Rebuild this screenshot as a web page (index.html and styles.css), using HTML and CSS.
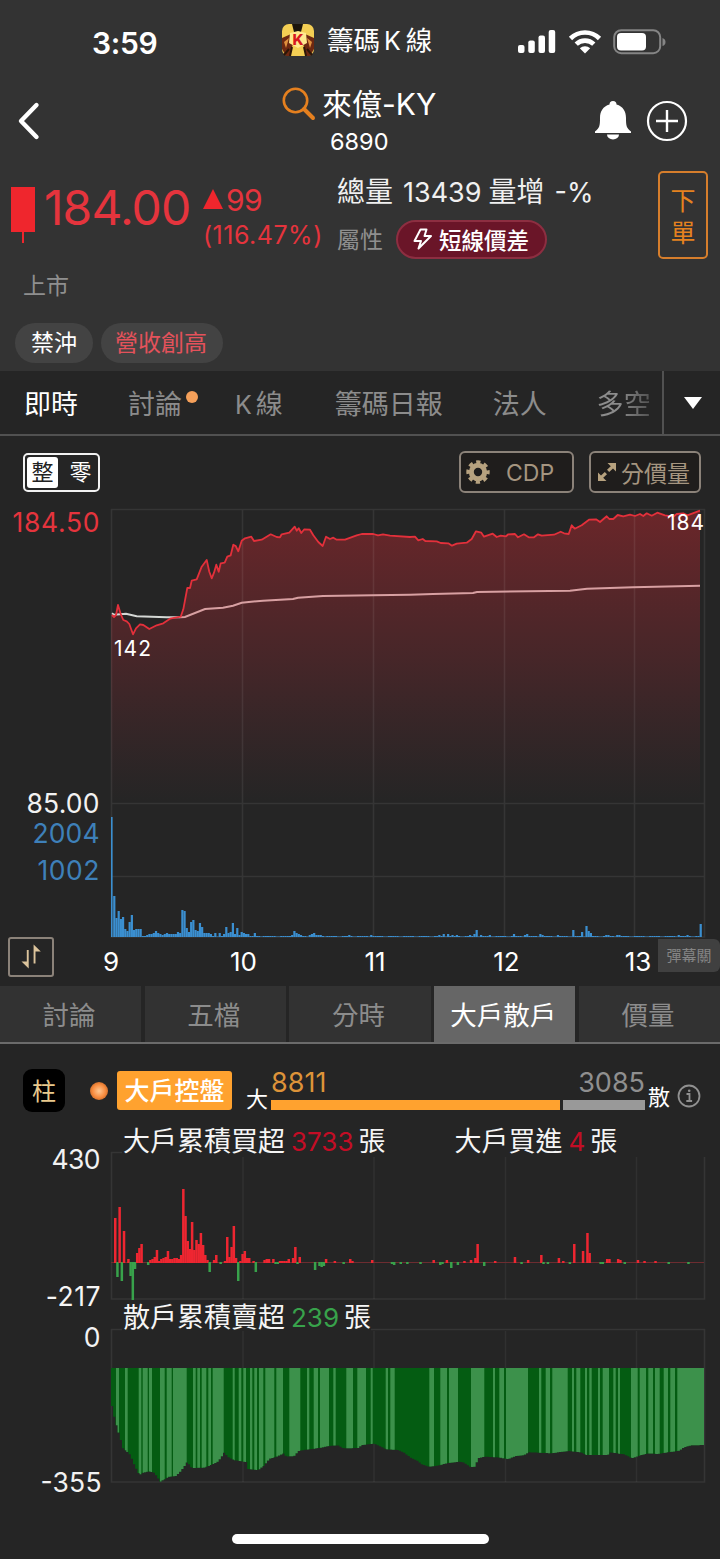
FILE: index.html
```html
<!DOCTYPE html>
<html lang="zh-Hant">
  <head>
    <meta charset="UTF-8">
    <title>籌碼K線</title>
    <link rel="stylesheet" href="styles.css">
  </head>
  <body>
    <div id="app">
      <!-- Header -->
      <header>
        <div class="status-bar">
          <div class="time">3:59</div>
          <div class="app-name">
            <svg width="34" height="32" viewBox="0 0 34 32">
              <rect x="1" y="0" width="32" height="32" rx="7" fill="#f4cf54"/>
              <path d="M11 0h11l-2 8h-7z" fill="#1c150c"/>
              <path d="M1 14l9-4 3 5-4 17H5L1 25zM33 14l-9-4-3 5 4 17h4l4-7z" fill="#6d2811"/>
              <path d="M3 18l5-4-3 10zM31 18l-5-4 3 10z" fill="#e0903d"/>
              <path d="M9 32l2-9M25 32l-2-9M3 31l5-6M31 31l-5-6" stroke="#2b1608" stroke-width="2"/>
              <path d="M9 9l8-2 8 2 1 10-9 5-9-5z" fill="#ffe98e"/>
              <text x="17" y="21" text-anchor="middle" font-size="15" font-weight="800" fill="#d7191f">K</text>
            </svg>
            <span>籌碼<i>K</i>線</span>
          </div>
          <div class="status-icons">
            <svg width="38" height="26" viewBox="0 0 38 26" fill="#fff">
              <rect x="0" y="16" width="6.500" height="8" rx="2"/>
              <rect x="10.300" y="11.500" width="6.500" height="12.500" rx="2"/>
              <rect x="20.500" y="6.500" width="6.500" height="17.500" rx="2"/>
              <rect x="30.700" y="1" width="6.500" height="23" rx="2"/>
            </svg>
            <svg width="34" height="26" viewBox="0 0 34 26" fill="none" stroke="#fff" stroke-width="4.600">
              <path d="M2.500 9.500a20.500 20.500 0 0 1 29 0"/>
              <path d="M8.200 15.200a12.500 12.500 0 0 1 17.600 0"/>
              <path d="M17 24.500l-5.200-5.200a7.500 7.500 0 0 1 10.400 0z" fill="#fff" stroke="none"/>
            </svg>
            <svg width="54" height="26" viewBox="0 0 54 26">
              <rect x="1.200" y="1.200" width="46" height="23" rx="7" fill="none" stroke="#858585" stroke-width="2"/>
              <rect x="4" y="4" width="29" height="17.400" rx="4" fill="#fff"/>
              <path d="M49.500 9q3 1 3 4t-3 4z" fill="#858585"/>
            </svg>
          </div>
        </div>

        <div class="nav">
          <svg class="back" width="24" height="38" viewBox="0 0 24 38">
            <path d="M19.500 3L4 19l15.500 16" fill="none" stroke="#fff" stroke-width="4.400" stroke-linecap="round" stroke-linejoin="round"/>
          </svg>
          <div class="stock">
            <div class="stock-name">
              <svg width="34" height="34" viewBox="0 0 34 34" fill="none" stroke="#e5801f">
                <circle cx="13.500" cy="13.500" r="11.700" stroke-width="2.600"/>
                <path d="M22 22l9 9" stroke-width="4" stroke-linecap="round"/>
              </svg>
              <span>來億-KY</span>
            </div>
            <div class="stock-id">6890</div>
          </div>
          <div class="nav-icons">
            <svg width="38" height="40" viewBox="0 0 38 40" fill="#fff">
              <path d="M19 1a3.500 3.500 0 0 1 3.500 3.500C29 6.500 32 11 32 18c0 8 .5 10 5 13.500V33H1v-1.500C5.500 28 6 26 6 18c0-7 3-11.500 9.500-13.500A3.500 3.500 0 0 1 19 1z"/>
              <path d="M13 34.500h12a6 5 0 0 1-12 0z"/>
            </svg>
            <svg width="42" height="42" viewBox="0 0 42 42" fill="none" stroke="#fff">
              <circle cx="21" cy="21" r="19" stroke-width="2.200"/>
              <path d="M21 10v22M10 21h22" stroke-width="2.400"/>
            </svg>
          </div>
        </div>

        <div class="quote">
          <svg class="candle" width="24" height="58" viewBox="0 0 24 58" fill="#ef262d">
            <rect width="24" height="45"/>
            <rect x="11" y="45" width="2" height="11"/>
          </svg>
          <div class="price">184.00</div>
          <div class="change">
            <div class="change-value">
              <svg width="20" height="20" viewBox="0 0 20 20"><path d="M10 0l10 20H0z" fill="#ef262d"/></svg>
              <span>99</span>
            </div>
            <div class="change-rate">(116.47%)</div>
          </div>
          <div class="volume">
            <div class="total"><span>總量</span><b>13439</b><span>量增</span><b class="rate">-%</b></div>
            <div class="attr">
              <span class="attr-name">屬性</span>
              <span class="attr-tag">
                <svg width="20" height="22" viewBox="0 0 20 22" fill="none" stroke="#fff" stroke-width="2" stroke-linejoin="round">
                  <path d="M7.500 1.500h6L11.500 8h6.500L5.500 20.500 8 13H1.500z"/>
                </svg>
                短線價差
              </span>
            </div>
          </div>
          <div class="order"><span>下</span><span>單</span></div>
        </div>

        <div class="market">上市</div>
        <div class="tags">
          <span class="tag">禁沖</span>
          <span class="tag hot">營收創高</span>
        </div>
      </header>

      <!-- Main tabs -->
      <nav class="tabs">
        <div class="tab-list">
          <span class="active">即時</span>
          <span class="new">討論</span>
          <span><i>K</i>線</span>
          <span>籌碼日報</span>
          <span>法人</span>
          <span class="fade">多空</span>
        </div>
        <div class="more"><svg width="18" height="12" viewBox="0 0 18 12"><path d="M0 0h18L9 12z" fill="#fff"/></svg></div>
      </nav>

      <!-- Chart toolbar -->
      <div class="toolbar">
        <div class="lot"><span class="on">整</span><span>零</span></div>
        <div class="tool cdp">
          <svg width="24" height="24" viewBox="-12 -12 24 24" fill="none" stroke="#b7a27f">
            <circle r="6.700" stroke-width="5"/>
            <circle r="9.900" stroke-width="3.600" stroke-dasharray="4.200 3.575" stroke-dashoffset="2.100"/>
          </svg>
          <span>CDP</span>
        </div>
        <div class="tool">
          <svg width="20" height="20" viewBox="0 0 20 20" fill="#b7a27f">
            <path d="M10.500 1H19v8.500l-3-3-3.800 3.500-2.200-2.200 3.800-3.500zM9.500 19H1v-8.500l3 3L7.800 10l2.200 2.200-3.800 3.500z"/>
          </svg>
          <span>分價量</span>
        </div>
      </div>

      <!-- Price and volume -->
      <svg class="price-chart" width="720" height="436" viewBox="0 502 720 436">
        <defs>
          <linearGradient id="price-fill" x1="0" y1="510" x2="0" y2="803" gradientUnits="userSpaceOnUse">
            <stop offset="0" stop-color="#ee2832" stop-opacity=".35"/>
            <stop offset=".5" stop-color="#d82a38" stop-opacity=".19"/>
            <stop offset="1" stop-color="#c03040" stop-opacity="0"/>
          </linearGradient>
        </defs>
        <path id="price-area" fill="url(#price-fill)"/>
        <path class="grid" d="M111.500 509.500H704.500V937H111.500zM111 803.500H704M111 876.500H704M242.500 509V937M373.500 509V937M504.500 509V937M634.500 509V937"/>
        <path id="average-line" fill="none" stroke="#d8a0a2" stroke-width="2"/>
        <path d="M112 613.300L114 614.700L126 613.700L136.700 616.300L166.700 617.300L180 617.200" fill="none" stroke="#d5d8d5" stroke-width="2"/>
        <path id="price-line" fill="none" stroke="#e3303b" stroke-width="1.800" stroke-linejoin="round"/>
        <g id="volume-bars" fill="#3b8fd0"></g>
        <g class="axis">
          <text x="99.500" y="532" class="up" textLength="87">184.50</text>
          <text x="99.500" y="813" textLength="73">85.00</text>
          <text x="99.500" y="842.500" class="vol" textLength="67">2004</text>
          <text x="99.500" y="880" class="vol" textLength="62">1002</text>
        </g>
        <g class="mark">
          <text x="114" y="656" textLength="37">142</text>
          <text x="667" y="530" textLength="37">184</text>
        </g>
      </svg>

      <div class="time-axis">
        <div class="swap">
          <svg width="20" height="26" viewBox="0 0 20 26" fill="#dcc49c">
            <path d="M5.800 6h1.900v18.500L.5 17.500h5.300zM12.600 19.500h1.900V7.500h5.300L12.600.5z"/>
          </svg>
        </div>
        <span>9</span><span>10</span><span>11</span><span>12</span><span>13</span>
        <div class="danmu">彈幕關</div>
      </div>

      <!-- Detail tabs -->
      <nav class="sub-tabs">
        <span>討論</span>
        <span>五檔</span>
        <span>分時</span>
        <span class="active">大戶散戶</span>
        <span>價量</span>
      </nav>

      <!-- Big player vs retail -->
      <div class="control">
        <div class="type">柱</div>
        <i class="light"></i>
        <div class="badge">大戶控盤</div>
        <span class="side">大</span>
        <div class="ratio">
          <div class="numbers"><span>8811</span><span>3085</span></div>
          <div class="bars"><i></i><i></i></div>
        </div>
        <span class="side right">散</span>
        <svg width="24" height="24" viewBox="0 0 24 24" fill="none" stroke="#909090" stroke-width="1.800">
          <circle cx="12" cy="12" r="10.500"/>
          <path d="M9.500 10h3v7M9.300 17h5.800"/>
          <circle cx="12.200" cy="6.700" r="1.300" fill="#909090" stroke="none"/>
        </svg>
      </div>

      <div class="summary big">
        <p>大戶累積買超<b class="buy">3733</b>張</p>
        <p>大戶買進<b class="buy">4</b>張</p>
      </div>
      <svg class="big-chart" width="720" height="150" viewBox="0 1152 720 150">
        <path class="grid" d="M122 1152.500H111.500V1299H704.500V1157"/>
        <path class="grid thin" d="M243 1157V1299M374 1157V1299M505.500 1157V1299M636.500 1157V1299"/>
        <path d="M111 1262.500H704" stroke="#6d2c30"/>
        <g id="big-bars"></g>
        <g class="axis">
          <text x="100.500" y="1169" textLength="49">430</text>
        </g>
      </svg>

      <div class="summary retail">
        <div class="low">-217</div>
        <p>散戶累積賣超<b class="sell">239</b>張</p>
      </div>
      <svg class="retail-chart" width="720" height="170" viewBox="0 1329 720 170">
        <defs><clipPath id="retail-shape"><path id="retail-path"/></clipPath></defs>
        <path class="grid" d="M122 1329.500H111.500V1482H704.500V1329.500H371"/>
        <path class="grid thin" d="M243 1331V1482M374 1331V1482M505.500 1331V1482M636.500 1331V1482"/>
        <g id="retail-bars" clip-path="url(#retail-shape)">
          <rect x="111" y="1368" width="593" height="120" fill="#045c12"/>
        </g>
        <g class="axis">
          <text x="100.500" y="1347">0</text>
          <text x="101.500" y="1492" textLength="61">-355</text>
        </g>
      </svg>

      <div class="home"></div>
    </div>
    <script src="chart.js"></script>
  </body>
</html>
```
FILE: styles.css
```css
* {
  box-sizing: border-box;
  margin: 0;
  padding: 0;
}

body {
  width: 720px;
  height: 1559px;
  background: #252525;
  color: #fff;
  font-family: Inter, "Noto Sans CJK TC", sans-serif;
  overflow: hidden;
}

i {
  font-style: normal;
}

b {
  font-weight: 400;
}

svg {
  display: block;
  flex: none;
  overflow: visible;
}

#app {
  display: flex;
  flex-direction: column;
  width: 720px;
  height: 1559px;
}

/* Header */
header {
  height: 371px;
  background: #333;
}

.status-bar {
  display: grid;
  grid-template-columns: 281px 237px auto;
  align-items: center;
  height: 84px;
}

.time {
  padding: 1px 0 0 92px;
  font-size: 30px;
  font-weight: 600;
  line-height: 36px;
  letter-spacing: -0.3px;
}

.app-name {
  display: flex;
  align-items: center;
  gap: 12px;
  height: 80px;
  font-size: 26.5px;
  line-height: 36px;
}

.app-name svg {
  margin-top: -4px;
}

.app-name i {
  padding: 0 5px 0 4px;
  font-size: 25px;
}

.app-name span {
  margin-top: -4px;
}

.status-icons {
  display: flex;
  gap: 12px;
}

.status-icons svg:last-child {
  margin-left: -1px;
}

.nav {
  display: flex;
  height: 76px;
}

.back {
  margin: 18px 0 0 17px;
}

.stock {
  width: 160px;
  margin-left: 241px;
}

.stock-name {
  display: flex;
  gap: 6px;
  height: 42px;
  font-size: 30px;
  line-height: 41px;
  white-space: nowrap;
}

.stock-name svg {
  margin-top: 3px;
}

.stock-id {
  padding-left: 48px;
  font-size: 23.5px;
  line-height: 31px;
}

.nav-icons {
  display: flex;
  gap: 14px;
  width: 126px;
  margin-top: 16px;
  margin-left: 152px;
}

.quote {
  display: flex;
  height: 108px;
  color: #e5343d;
}

.candle {
  margin: 27px 0 0 11px;
}

.price {
  width: 168px;
  padding-left: 9px;
  font-size: 48px;
  line-height: 96px;
  letter-spacing: -0.9px;
}

.change {
  width: 134px;
}

.change-value {
  display: flex;
  gap: 3px;
  height: 58px;
  padding-top: 22px;
  font-size: 30px;
  line-height: 36px;
  letter-spacing: -0.5px;
}

.change-value svg {
  margin-top: 7px;
}

.change-rate {
  font-size: 25px;
  line-height: 34px;
  letter-spacing: 0.5px;
}

.volume {
  width: 321px;
  color: #f0f0f0;
}

.total {
  display: flex;
  height: 60px;
  padding-top: 13px;
  font-size: 28px;
  line-height: 39px;
}

.total b {
  margin: 0 7px 0 10px;
  font-size: 27px;
}

.attr {
  display: flex;
  align-items: center;
  gap: 14px;
  height: 39px;
}

.attr-name {
  margin-top: -3px;
  color: #8f8f8f;
  font-size: 23px;
}

.attr-tag {
  display: flex;
  align-items: center;
  gap: 6px;
  width: 151px;
  height: 39px;
  margin-left: -1px;
  padding: 0 0 2px 15px;
  border: 2px solid #8d2e41;
  border-radius: 20px;
  background: #6a1528;
  color: #fff;
  font-size: 22.5px;
  font-weight: 500;
}

.order {
  display: flex;
  flex-direction: column;
  justify-content: center;
  align-items: center;
  width: 50px;
  height: 88px;
  margin-top: 11px;
  padding-top: 3px;
  border: 2px solid #d67e2c;
  border-radius: 5px;
  color: #e5821f;
  font-size: 25px;
  line-height: 32px;
}

.market {
  height: 55px;
  padding-left: 23px;
  color: #8f8f8f;
  font-size: 23px;
  line-height: 36px;
}

.tags {
  display: flex;
  gap: 8px;
  padding-left: 15px;
}

.tag {
  height: 40px;
  padding: 0 16px;
  border-radius: 20px;
  background: #434343;
  font-size: 23px;
  line-height: 40px;
}

.tag.hot {
  padding: 0 16px 0 14px;
  color: #e4525b;
}

/* Main tabs */
.tabs {
  display: flex;
  height: 65px;
  border-bottom: 2px solid #515151;
}

.tab-list {
  display: flex;
  width: 664px;
  padding-left: 24px;
  border-right: 2px solid #515151;
  color: #8c8c8c;
  font-size: 27px;
  line-height: 67px;
}

.tab-list span {
  height: 63px;
  margin-right: 50px;
  white-space: nowrap;
}

.tab-list i {
  padding-right: 4px;
  font-size: 25px;
}

.tab-list .active {
  color: #fff;
}

.tab-list .new {
  position: relative;
  margin-right: 53px;
}

.tab-list .new::after {
  content: "";
  position: absolute;
  top: 20px;
  right: -16px;
  width: 12px;
  height: 12px;
  border-radius: 50%;
  background: #f5a05a;
}

.tab-list .new + span {
  margin-right: 52px;
}

.tab-list .fade {
  margin-right: 0;
  background: linear-gradient(90deg, #8c8c8c 40%, #505050);
  background-clip: text;
  -webkit-background-clip: text;
  color: transparent;
}

.more {
  display: flex;
  flex: 1;
  align-items: center;
  justify-content: center;
  padding-left: 2px;
}

/* Chart toolbar */
.toolbar {
  display: flex;
  height: 66px;
  padding: 15px 19px 0 23px;
}

.lot {
  display: flex;
  justify-content: space-between;
  width: 77px;
  height: 39px;
  margin-top: 2px;
  margin-right: auto;
  padding: 2px;
  border: 2px solid #f2f2f2;
  border-radius: 5px;
  font-size: 22px;
  line-height: 31px;
}

.lot span {
  width: 31px;
  height: 31px;
  border-radius: 3px;
  text-align: center;
}

.lot .on {
  background: #fff;
  color: #222;
}

.tool {
  display: flex;
  align-items: center;
  gap: 4px;
  width: 112px;
  height: 42px;
  margin-left: 15px;
  padding-left: 6px;
  border: 2px solid #8b8279;
  border-radius: 6px;
  background: #1f1d1c;
  color: #a59580;
  font-size: 23px;
}

.tool span {
  margin-top: -1px;
}

.cdp {
  gap: 16px;
  width: 115px;
  padding-left: 5px;
}

.cdp span {
  margin-top: 1px;
}

/* Charts */
.grid {
  fill: none;
  stroke: #fff;
  stroke-opacity: .075;
  stroke-width: 1.6;
}

.grid.thin {
  stroke-opacity: .05;
}

.axis {
  fill: #f2f2f2;
  font-size: 26.5px;
  text-anchor: end;
}

.axis .up {
  fill: #e5343d;
}

.axis .vol {
  fill: #3e80b9;
}

.mark {
  fill: #fff;
  font-size: 21px;
}

.time-axis {
  display: grid;
  grid-template-columns: 46px 114px 131.5px 131.5px 131.5px 32px auto;
  height: 48px;
  padding-left: 8px;
  font-size: 26px;
  line-height: 47px;
}

.time-axis span {
  width: 60px;
  margin-left: 27px;
  text-align: center;
}

.time-axis span + span {
  margin-left: 45.5px;
}

.swap {
  display: flex;
  align-items: center;
  justify-content: center;
  width: 46px;
  height: 40px;
  margin-top: -1px;
  border: 2px solid #8b8279;
  border-radius: 3px;
}

.danmu {
  justify-self: end;
  width: 62px;
  height: 33px;
  margin-top: 1px;
  border-radius: 0 6px 6px 0;
  background: #404040;
  color: #858585;
  font-size: 15px;
  line-height: 33px;
  text-align: center;
}

/* Detail tabs */
.sub-tabs {
  display: grid;
  grid-template-columns: repeat(5, 1fr);
  gap: 3.5px;
  height: 58px;
  border-bottom: 2px solid #6b6b6b;
  color: #8c8c8c;
  font-size: 26.5px;
  line-height: 59px;
  text-align: center;
}

.sub-tabs span {
  height: 56px;
  padding-right: 3px;
  background: #323232;
}

.sub-tabs .active {
  background: #666;
  color: #fff;
}

/* Big player vs retail */
.control {
  display: flex;
  height: 82px;
  padding: 25px 0 0 23px;
}

.type {
  width: 42px;
  height: 43px;
  border-radius: 9px;
  background: #000;
  color: #e9c98d;
  font-size: 24px;
  line-height: 45px;
  text-align: center;
}

.light {
  width: 18px;
  height: 18px;
  margin: 13px 9px 0 25px;
  border-radius: 50%;
  background: radial-gradient(#ffc893, #f98d40 50%, #a34d14);
}

.badge {
  width: 115px;
  height: 39px;
  margin-top: 2px;
  border-radius: 3px;
  background: #ffa22f;
  font-size: 25px;
  font-weight: 500;
  line-height: 40px;
  text-align: center;
}

.side {
  margin: 13px 3px 0 14px;
  font-size: 22px;
  line-height: 34px;
}

.side.right {
  margin: 11px 7px 0 3px;
}

.control svg {
  margin-top: 15px;
}

.ratio {
  width: 374px;
}

.numbers {
  display: flex;
  justify-content: space-between;
  height: 31px;
  color: #dd9339;
  font-size: 27px;
  line-height: 27px;
}

.numbers span + span {
  color: #8f8f8f;
}

.bars {
  display: flex;
  gap: 3.5px;
  height: 10px;
}

.bars i {
  width: 82px;
  background: #999;
}

.bars i:first-child {
  flex: 1;
  background: #ffa22f;
}

.summary {
  display: flex;
  height: 26px;
  color: #f5f5f5;
  font-size: 27px;
  line-height: 31px;
  white-space: nowrap;
}

.summary.big {
  padding-left: 123px;
}

.summary p + p {
  margin-left: 69px;
}

.summary b {
  margin: 0 5px 0 6px;
  font-size: 26px;
}

.low {
  width: 123px;
  margin-top: -6px;
  padding-right: 22px;
  font-size: 26.5px;
  line-height: 0;
  letter-spacing: 0.5px;
  text-align: right;
}

.retail {
  height: 27px;
}

.buy {
  color: #c30d25;
}

.sell {
  color: #38a24b;
}

/* Home indicator */
.home {
  width: 257px;
  height: 10px;
  margin: 35px 0 0 232px;
  border-radius: 5px;
  background: #fff;
}
```
FILE: chart.js
```js
var LEFT = 111;
var STEP = 593 / 270; // one bar per minute, 9:00 - 13:30

var price = [
  [112,615],[114,617],[116,615],[118,605],[120.7,614],[123.3,620],[126.7,621.3],[129.3,624],[133,634.3],[136,628.3],
  [140,624.3],[143.3,625],[149.3,629],[156.7,625.3],[163.3,623.3],[170,618.7],[180.7,616.7],[183.3,609.3],[187.3,588],[190,588],
  [191.7,580.7],[196.7,579.3],[201.7,566.7],[206.7,560],[209.3,571.7],[211.7,578.3],[214,572.7],[216.3,564.7],[218.7,571.7],[220.7,563.3],
  [224.7,562.7],[227.3,556.7],[230.7,555.3],[233.3,544.7],[235.7,546],[238.3,551.3],[241.7,540.7],[245,538.3],[251.3,536.7],[254,541],
  [261.7,539.7],[270.7,534.3],[276.7,537],[280,537.3],[281.7,534.3],[289.3,532.7],[294.7,526.7],[296.7,530.7],[298.7,528.3],[301.3,533],
  [304.3,529.3],[310,529.7],[313.3,535.3],[318.3,542],[322.7,546],[326,536.7],[330,539],[333.3,537.7],[336.7,539.7],[345,539.7],
  [356.7,535.3],[361.7,534],[373.3,534],[378,535.3],[383,534.3],[390,535.7],[410,537],[415,536.7],[418.3,540.3],[422.7,539],
  [425.3,541],[436.7,541.3],[440.7,543],[448.3,543.3],[452,545.7],[456.7,543.7],[466.7,542.7],[471.7,539],[476,531.3],[481.3,532.7],
  [484,536.7],[492.7,533.7],[496.7,537],[500.7,535.7],[506,536.3],[508.3,534.3],[515,534],[518,537.3],[524,534.3],[528.7,537.3],
  [534,537.3],[538,534.3],[541.7,535.7],[554,534.7],[560.7,531.7],[564,533.3],[568.7,534],[571.7,525.3],[574.7,528.7],[581.7,525.3],
  [589,519.7],[596,519.3],[600,522],[606.7,516.3],[609.3,519],[613.3,519],[617.7,515],[623.3,516.3],[630,514.7],[635,516],
  [640,514],[643.3,516],[646.7,513.3],[651.7,515.7],[657.3,512.7],[665,515.3],[673.3,516.7],[676.7,514],[683.3,513.3],[687.3,515.3],
  [692.7,513.3],[700,510.7]
];

var average = [
  [180,617.2],[185,617],[205,609],[223,607.7],[233,605.7],[241.7,602.7],[263,600.7],[293,599],[298,597.7],[323,596],
  [373,595.3],[410,594.7],[433,594],[473,593],[477,592],[570,590.7],[587,588.7],[633,587.3],[700,585.7]
];

// first two hours minute by minute, quiet minutes are listed by index
var volume = [
  120,41,19,26,18,20,8,6,15,22,7,8,8,8,0,1,2,3,3,4,6,4,3,2,3,4,3,3,3,3,5,4,27,26,9,5,15,17,7,6,14,10,4,4,4,3,0,4,0,4,
  0,3,10,4,5,14,3,9,2,5,4,3,3,0,0,4,0,0,0,1,1,1,1,1,1,0,0,1,1,1,1,1,2,6,4,3,2,0,0,0,2,3,4,2,2,2,1
];
var volumeLate = {
  108:2,118:2,149:2,151:3,153:3,155:2,157:2,163:2,165:3,166:7,168:2,172:2,183:3,188:2,189:3,195:3,196:2,203:2,210:7,
  214:5,216:11,217:6,218:4,225:2,226:2,230:2,231:2,258:2,262:2,268:13
};

var big = [
  0,44,-14,55,-18,31,0,3,-13,-37,-6,9,14,18,0,0,-2,2,3,5,12,1,3,4,5,11,3,3,4,4,3,7,73,46,21,13,40,12,22,18,29,17,7,2,-9,
  0,2,7,0,-1,0,1,25,5,15,36,4,-18,1,8,11,4,4,0,1,-9,0,0,0,2,3,3,0,3,-1,-1,1,1,1,1,3,0,4,15,-1,5,0,0,0,0,0,0,-7,0,-3,-4,-3,3
];
var bigLate = {
  101:1,105:-1,108:3,109:1,118:2,127:-1,128:-2,131:-1,134:-1,140:-1,146:2,149:-2,150:-1,152:2,154:-5,157:-2,160:1,
  163:2,165:4,166:18,169:-3,174:1,183:5,186:-1,189:2,195:7,196:-1,198:-1,203:4,205:1,208:-1,210:18,214:11,216:29,217:9,
  222:-1,223:-1,225:3,226:3,230:3,231:2,233:-1,239:2,242:1,247:1,253:-1,262:-1
};

var retail = [
  [111,1406],[113,1416],[115.3,1425],[119.3,1438],[121.7,1448],[126,1451.7],[129.3,1455],[133.3,1465],[138.3,1475],[141.7,1472.7],
  [148,1471.3],[153.3,1473],[159.3,1481.5],[164,1479],[167,1477],[175,1476],[180,1470.7],[184.3,1465],[186.7,1460.7],[188.7,1466.7],
  [192,1468],[203,1467.7],[210,1465],[216.7,1461.7],[221,1456],[223.3,1452.3],[226.7,1457],[233,1460],[245,1462],[247,1469],
  [257,1470],[263,1465.7],[268,1459],[277,1456],[283,1453.3],[285,1456.7],[293,1456],[298,1450.7],[303,1450],[320,1447.7],
  [327,1446],[337,1445.3],[342,1448.3],[357,1448],[361,1445],[373,1443.7],[380,1446.7],[385,1449.3],[397,1450],[403,1452.7],
  [410,1458],[417,1461],[420,1464],[428,1466.7],[437,1465.5],[447,1463],[459,1461.7],[463,1462.7],[470,1467.3],[474,1466.7],
  [477,1458.3],[483,1456.7],[497,1457.3],[507,1459],[515,1456],[523,1455],[528,1452.3],[550,1453.3],[567,1451],[580,1452.3],
  [585,1455],[607,1455],[609,1452.3],[623,1454.3],[631,1458.3],[640,1455],[648,1453.3],[657,1454],[667,1452.3],[678,1450.7],
  [683,1447.3],[690,1445.3],[704,1445]
];
var retailLight = [
  [116,119],[125,127.7],[138.7,141.3],[142.7,147.7],[149,152],[160,164.7],[166.7,171.7],[173,186.7],[193,195.7],[197.3,200],
  [201.7,206.3],[208.3,211],[212.7,223.7],[232.7,234.7],[238.7,241.3],[243.3,246],[250,252.3],[254.3,257],[259,263.3],[265.3,274.3],
  [276.3,283],[289.3,300.3],[307,309.3],[313.7,318],[320,329],[333.3,335.7],[346.3,353],[357.3,366],[370.7,372.7],[385.7,388],
  [390.3,394.7],[429.3,434],[440.3,447],[449,458],[471,484.3],[493,495],[499.3,504],[506,528],[539,541.3],[545.7,550],
  [552.3,567.7],[572,574],[576.3,580.3],[585,587],[589.3,591.7],[598,600],[602.7,609],[613.3,615.7],[618,620],[631,637.7],
  [639.7,646],[648.3,653],[655,659.7],[663.7,668],[670.3,675],[677.3,704]
];

function line(points) {
  return 'M' + points.map(function (p) { return p.join(' '); }).join('L');
}

function addRect(parent, x, y, w, h, fill) {
  var r = document.createElementNS('http://www.w3.org/2000/svg', 'rect');
  r.setAttribute('x', x);
  r.setAttribute('y', y);
  r.setAttribute('width', w);
  r.setAttribute('height', h);
  if (fill) r.setAttribute('fill', fill);
  parent.appendChild(r);
}

function $(id) {
  return document.getElementById(id);
}

$('price-line').setAttribute('d', line(price));
$('price-area').setAttribute('d', line(price) + 'V803H111V615Z');
$('average-line').setAttribute('d', line(average));

for (var i = 0; i < 269; i++) {
  var x = LEFT + i * STEP;
  var v = volume[i] || volumeLate[i] || (i % 7 < 5 ? 1 : 0.5);
  addRect($('volume-bars'), x, 937 - v, i === 0 ? 1.6 : 2.2, v);

  var b = big[i] || bigLate[i] || 0;
  if (b > 0) addRect($('big-bars'), x + 0.8, 1262 - b, 2.5, b + 1, '#ee2631');
  if (b < 0) addRect($('big-bars'), x + 0.8, 1262, 2.5, 1 - b, '#38a24b');
}

// stepped lower edge, one step per minute
var d = 'M111 1368';
for (var m = 0, k = 0; m < 270; m++) {
  var sx = LEFT + m * STEP;
  while (k < retail.length - 2 && retail[k + 1][0] < sx) k++;
  var p = retail[k], q = retail[k + 1];
  var y = p[1] + (q[1] - p[1]) * (sx - p[0]) / (q[0] - p[0]);
  d += 'L' + sx + ' ' + y + 'h' + STEP;
}
$('retail-path').setAttribute('d', d + 'V1368Z');

retailLight.forEach(function (s) {
  addRect($('retail-bars'), s[0], 1368, s[1] - s[0], 120, '#3c914b');
});
```
